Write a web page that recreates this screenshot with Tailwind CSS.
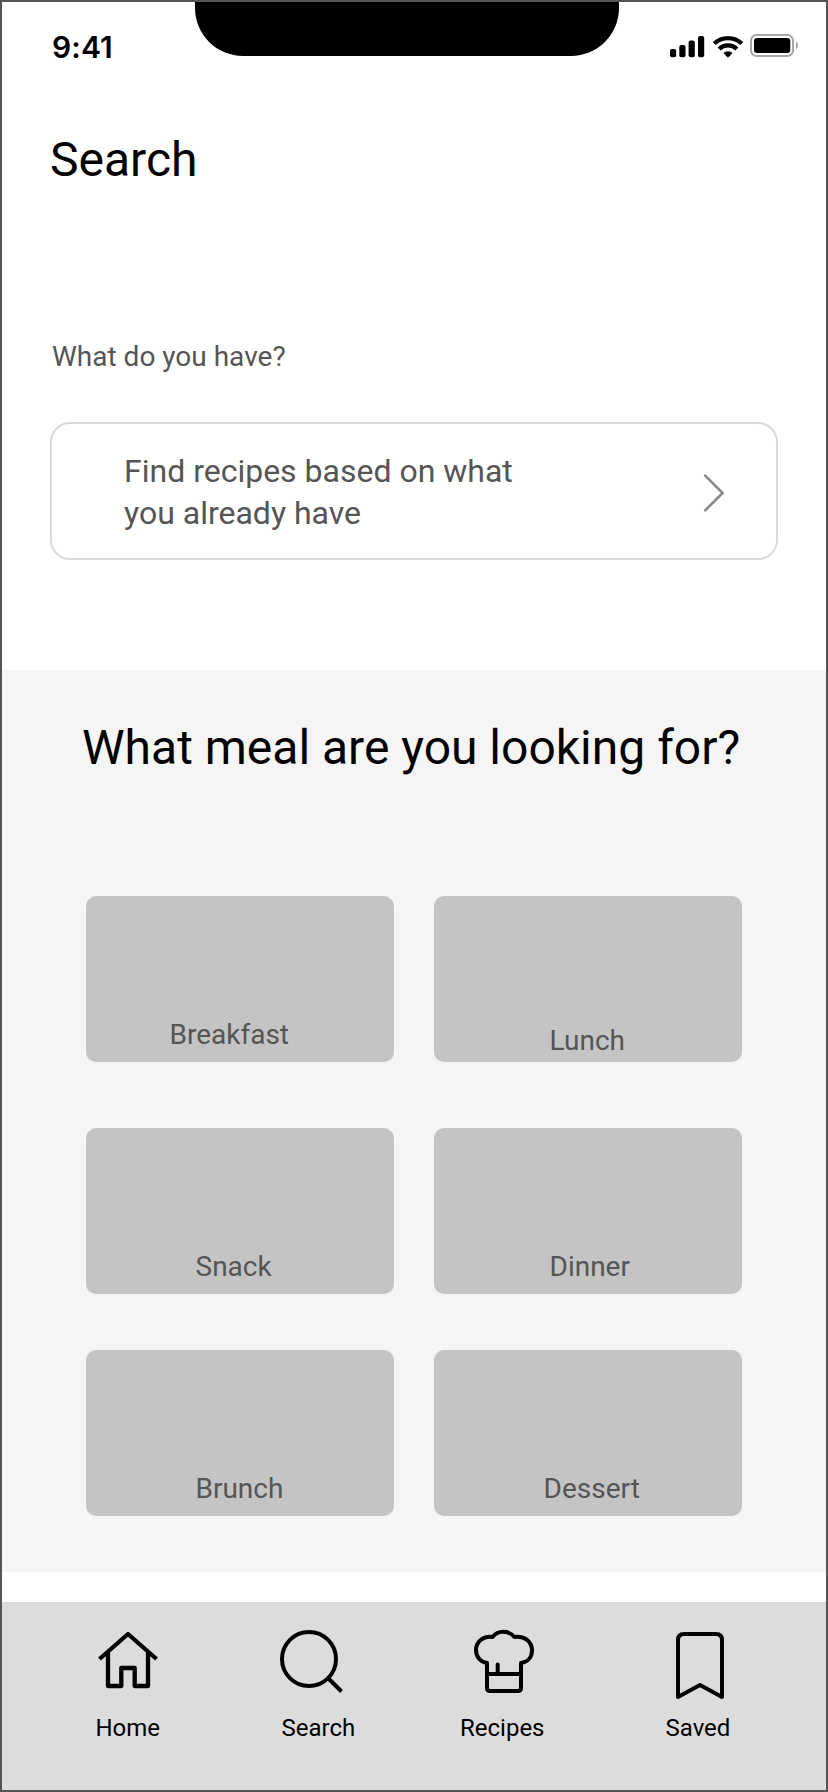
<!DOCTYPE html>
<html lang="en">
<head>
<meta charset="utf-8">
<title>Search</title>
<script src="https://cdn.jsdelivr.net/npm/@tailwindcss/browser@4"></script>
</head>
<body class="font-['Roboto',sans-serif] bg-white text-black">
<div class="w-[828px] h-[1792px] border-2 border-[#555555] flex flex-col overflow-hidden">
  <!-- Status bar -->
  <header class="h-[130px] shrink-0 flex items-start pl-[50px]">
    <div class="w-[143px] shrink-0 pt-[27px] font-['Inter',sans-serif] font-semibold text-[30px] leading-[36px] tracking-[0.1px]">9:41</div>
    <div class="w-[424px] shrink-0 h-[54px] bg-black rounded-b-[48px]"></div>
    <svg class="ml-[50px] mt-[30px] w-[130px] h-[30px] shrink-0" viewBox="669 32 130 30">
      <rect x="670" y="49" width="6.2" height="8.3" rx="2"/>
      <rect x="679.3" y="45" width="6.2" height="12.3" rx="2"/>
      <rect x="688.6" y="40.5" width="6.2" height="16.8" rx="2"/>
      <rect x="698" y="36" width="6.2" height="21.3" rx="2"/>
      <g fill="none" stroke="#000" stroke-width="4.2">
        <path d="M714.200 43.600a20 20 0 0 1 27.600 0"/>
        <path d="M719.200 49a12.600 12.600 0 0 1 17.600 0"/>
      </g>
      <path d="M728 57.800l-4.600-4.800a6.600 6.600 0 0 1 9.200 0z"/>
      <rect x="751" y="35" width="42" height="21" rx="5.5" fill="none" stroke="#a6a6a6" stroke-width="2"/>
      <rect x="754" y="38" width="36.3" height="15" rx="3"/>
      <path d="M796 41.500c2.700 1.600 2.700 6.200 0 7.800z" fill="#a6a6a6"/>
    </svg>
  </header>

  <main class="flex flex-col h-[1470px] shrink-0">
    <div class="flex flex-col px-12 h-[538px]">
      <h1 class="text-[48px] leading-[56px]">Search</h1>
      <p class="mt-[153px] pl-[2px] text-[28px] leading-8 text-[#555555]">What do you have?</p>
      <a class="mt-[49px] h-[138px] shrink-0 rounded-[20px] border-2 border-[#dadada] flex items-center justify-between pl-[72px] pr-[52px] text-[32px] leading-[42px] text-[#555555]">
        <span class="pt-[2px]">Find recipes based on what<br>you already have</span>
        <svg class="w-[22px] h-[38px] mt-[3px]" viewBox="0 0 22 38" fill="none" stroke="#888888" stroke-width="2.6" stroke-linecap="round"><path d="M3.200 1.700L20.600 19L3.200 36.300"/></svg>
      </a>
    </div>
    <section class="bg-[#f5f5f5] h-[902px] pt-[50px] px-[84px]">
      <h2 class="-ml-1 whitespace-nowrap text-[48px] leading-[56px]">What meal are you looking for?</h2>
      <div class="mt-[120px] grid grid-cols-[308px_308px] grid-rows-[166px_166px_166px] gap-x-10 text-[28px] leading-8 text-[#555555]">
        <div class="bg-[#c4c4c4] rounded-[10px] pt-[123px] pl-[83.5px]">Breakfast</div>
        <div class="bg-[#c4c4c4] rounded-[10px] pt-[129px] pl-[115.5px]">Lunch</div>
        <div class="mt-[66px] h-[166px] bg-[#c4c4c4] rounded-[10px] pt-[123px] pl-[109.5px]">Snack</div>
        <div class="mt-[66px] h-[166px] bg-[#c4c4c4] rounded-[10px] pt-[123px] pl-[115.5px]">Dinner</div>
        <div class="mt-[122px] h-[166px] bg-[#c4c4c4] rounded-[10px] pt-[123px] pl-[109.5px]">Brunch</div>
        <div class="mt-[122px] h-[166px] bg-[#c4c4c4] rounded-[10px] pt-[123px] pl-[109.5px]">Dessert</div>
      </div>
    </section>
  </main>

  <!-- Tab bar -->
  <nav class="grow bg-[#dcdcdc] flex pl-[93px] pt-[26px] text-[24px] leading-7">
    <a class="w-[186px] flex flex-col">
      <svg class="w-[72px] h-[86px]" viewBox="95 1628 72 86" fill="none" stroke="#000" stroke-width="4.3" stroke-linejoin="round"><path d="M99.500 1659L128 1634L156.500 1659"/><path d="M108 1652V1686H121.300V1668H134.700V1686H148V1652"/></svg>
      <span class="pl-[0.5px]">Home</span>
    </a>
    <a class="w-[179px] flex flex-col">
      <svg class="w-[72px] h-[86px]" viewBox="281 1628 72 86" fill="none" stroke="#000" stroke-width="4" overflow="visible"><circle cx="309" cy="1659" r="27"/><path d="M328 1678L341.500 1691.500"/></svg>
      <span class="pl-[0.5px]">Search</span>
    </a>
    <a class="w-[205px] flex flex-col">
      <svg class="w-[80px] h-[86px]" viewBox="460 1628 80 86" fill="none" stroke="#000" stroke-width="4" stroke-linecap="round" stroke-linejoin="round"><path d="M487 1663V1688Q487 1691 490 1691H518Q521 1691 521 1688V1663C528 1662 532 1657 532 1650.500C532 1642 525 1635.500 514.500 1637C508.500 1630 498 1630 492.500 1637C483 1635.500 476 1642 476 1650C476 1657 480.500 1662 487 1663M487 1674H521M497.700 1673V1664.500"/></svg>
      <span>Recipes</span>
    </a>
    <a class="flex flex-col">
      <svg class="w-[72px] h-[86px]" viewBox="665 1628 72 86" fill="none" stroke="#000" stroke-width="4" stroke-linejoin="round"><path d="M678 1697V1640Q678 1634 684 1634H716Q722 1634 722 1640V1697L700 1685Z"/></svg>
      <span class="pl-[0.5px]">Saved</span>
    </a>
  </nav>
</div>
</body>
</html>
